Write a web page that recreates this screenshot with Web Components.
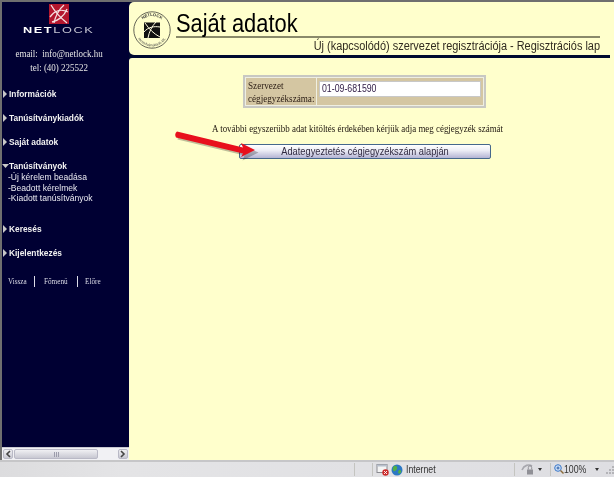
<!DOCTYPE html>
<html>
<head>
<meta charset="utf-8">
<title>Saját adatok</title>
<style>
  html, body { margin: 0; padding: 0; height: 100%; overflow: hidden; }
  body { background: #ffffcc; font-family: "Liberation Sans", Arial, sans-serif; }
</style>
</head>
<body>
<nl-window>
  <nl-sidebar slot="side">
    <nl-menu-item>Információk</nl-menu-item>
    <nl-menu-item>Tanúsítványkiadók</nl-menu-item>
    <nl-menu-item>Saját adatok</nl-menu-item>
    <nl-menu-item open>Tanúsítványok
      <span slot="sub">-Új kérelem beadása</span>
      <span slot="sub">-Beadott kérelmek</span>
      <span slot="sub">-Kiadott tanúsítványok</span>
    </nl-menu-item>
    <nl-menu-item>Keresés</nl-menu-item>
    <nl-menu-item>Kijelentkezés</nl-menu-item>
  </nl-sidebar>
  <nl-header slot="head" title-text="Saját adatok" sub-text="Új (kapcsolódó) szervezet regisztrációja - Regisztrációs lap"></nl-header>
  <nl-form slot="main"></nl-form>
</nl-window>

<script>
class NlWindow extends HTMLElement {
  constructor() {
    super();
    this.attachShadow({ mode: 'open' });
    this.shadowRoot.innerHTML = `
      <style>
        :host { display: flex; flex-direction: column; width: 614px; height: 477px; filter: blur(.35px); }
        .top { flex: 1; display: flex; min-height: 0; background: #6f6f6f; padding: 2px 0 0 2px; }
        .left { width: 127px; display: flex; flex-direction: column; }
        .right { flex: 1; display: flex; flex-direction: column; background: #000033; }
      </style>
      <div class="top">
        <div class="left">
          <slot name="side"></slot>
          <nl-scrollbar></nl-scrollbar>
        </div>
        <div class="right">
          <slot name="head"></slot>
          <slot name="main"></slot>
        </div>
      </div>
      <nl-statusbar></nl-statusbar>
    `;
  }
}

class NlSidebar extends HTMLElement {
  constructor() {
    super();
    this.attachShadow({ mode: 'open' });
    this.shadowRoot.innerHTML = `
      <style>
        :host { display: block; flex: 1; background: #000033; color: #fff; overflow: hidden; }
        .logo { display: flex; flex-direction: column; align-items: center; padding: 2px 13px 0 0; }
        .logo svg { display: block; }
        .brand { font: bold 9.5px "Liberation Sans", Arial, sans-serif; letter-spacing: 1.2px; line-height: 10px; margin-top: 1px; transform: scaleX(1.34); }
        .brand span { font-weight: normal; color: #c4c4d2; }
        .contact { font: 9.5px/14px "Liberation Serif", "Times New Roman", serif; color: #e4e4e4; text-align: center; padding: 12px 13px 0 0; white-space: pre; margin-bottom: 7px; transform: scaleX(.946); transform-origin: 59px 0; }
        .links { display: flex; align-items: center; font: 8px "Liberation Serif", "Times New Roman", serif; color: #dcdce8; padding: 11px 0 0 6px; }
        .links span { height: 11px; line-height: 11px; transform: scaleX(.9); transform-origin: left; }
        .links i { width: 1px; height: 11px; background: #dcdce8; }
      </style>
      <div class="logo">
        <svg width="20" height="20" viewBox="0 0 20 20">
          <rect width="20" height="20" fill="#b3172e"/>
          <g fill="none" stroke="#f4dfe0" stroke-width="1.3">
            <path d="M2 1 C6 8 13 15 18 19"/>
            <path d="M15 1 C10 5 6 13 5 19"/>
            <path d="M1 13 C6 6 13 5 19 8"/>
            <path d="M3 18 C8 17 15 13 18 5"/>
          </g>
        </svg>
        <div class="brand">NET<span>LOCK</span></div>
      </div>
      <div class="contact">email:  info@netlock.hu
tel: (40) 225522</div>
      <slot></slot>
      <div class="links">
        <span>Vissza</span><i style="margin:0 9px 0 5px"></i><span>Főmenü</span><i style="margin:0 7px"></i><span>Előre</span>
      </div>
    `;
  }
}

class NlMenuItem extends HTMLElement {
  constructor() {
    super();
    this.attachShadow({ mode: 'open' });
    const open = this.hasAttribute('open');
    const arrow = open
      ? '<polygon points="0,2 7,2 3.5,6" fill="#c8c8c8"/>'
      : '<polygon points="1,0 5,4 1,8" fill="#c8c8c8"/>';
    this.shadowRoot.innerHTML = `
      <style>
        :host { display: block; font: bold 9.5px/12px "Liberation Sans", Arial, sans-serif; color: #f2f2f2; padding: 6px 0 ${open ? 13 : 6}px 0; white-space: nowrap; }
        .row { display: flex; align-items: center; }
        svg { width: 7px; height: 8px; flex: none; }
        .label { transform: scaleX(.88); transform-origin: left; }
        .sub { display: flex; flex-direction: column; font-weight: normal; line-height: 10.5px; margin-left: 6px; color: #e8e8f0; transform: scaleX(.9); transform-origin: left; }
      </style>
      <div class="row"><svg viewBox="0 0 7 8">${arrow}</svg><div class="label"><slot></slot></div></div>
      <div class="sub"><slot name="sub"></slot></div>
    `;
  }
}

class NlScrollbar extends HTMLElement {
  constructor() {
    super();
    this.attachShadow({ mode: 'open' });
    this.shadowRoot.innerHTML = `
      <style>
        :host { display: flex; height: 13px; flex: none; background: #f1f1f4; padding: 1px; box-sizing: border-box; gap: 1px; border-top: 1px solid #c9c9d2; }
        .b { box-sizing: border-box; border: 1px solid #b9b9c6; border-radius: 2px; background: linear-gradient(#f0f0f3, #c8c8d2); display: flex; align-items: center; justify-content: center; }
        .arr { width: 10px; }
        .thumb { width: 84px; gap: 1px; }
        .thumb i { width: 1px; height: 5px; background: #9c9cab; }
        .track { flex: 1; }
        path { fill: none; stroke: #444; stroke-width: 1.6; }
      </style>
      <div class="b arr"><svg width="6" height="8"><path d="M5 1 L2 4 L5 7"/></svg></div>
      <div class="b thumb"><i></i><i></i><i></i></div>
      <div class="track"></div>
      <div class="b arr"><svg width="6" height="8"><path d="M1 1 L4 4 L1 7"/></svg></div>
    `;
  }
}

class NlHeader extends HTMLElement {
  constructor() {
    super();
    this.attachShadow({ mode: 'open' });
    this.shadowRoot.innerHTML = `
      <style>
        :host { display: block; flex: none; height: 56px; box-sizing: border-box; padding-bottom: 3px; background: linear-gradient(90deg, #000a30 calc(100% - 4px), #ffffcc 0); }
        .wrap { display: flex; padding: 1px 14px 0 4px; height: 100%; box-sizing: border-box; background: #ffffcc; border-radius: 5px 0 0 5px; }
        .seal { flex: none; margin-top: 8px; }
        .text { flex: 1; margin-left: 5px; min-width: 0; }
        h1 { font: normal 25px/29px "Liberation Sans", Arial, sans-serif; color: #000; margin: 0; padding-top: 6px; height: 27px; border-bottom: 2px solid #8a8a6a; }
        h1 span { display: inline-block; transform: scaleX(.875); transform-origin: left; }
        p { font: 12.5px/14px "Liberation Sans", Arial, sans-serif; color: #302a20; margin: 1px 0 0; text-align: right; transform: scaleX(.875); transform-origin: right; white-space: nowrap; }
      </style>
      <div class="wrap">
        <svg class="seal" width="38" height="38" viewBox="0 0 38 38">
          <circle cx="19" cy="19" r="18.2" fill="none" stroke="#55554a" stroke-width=".9"/>
          <defs>
            <path id="top" d="M5 19 A14 14 0 0 1 33 19"/>
            <path id="bot" d="M2.6 19 A16.4 16.4 0 0 0 35.4 19"/>
          </defs>
          <text font-family="Liberation Sans" font-size="4.2" font-weight="bold" fill="#333"><textPath href="#top" startOffset="50%" text-anchor="middle">NETLOCK</textPath></text>
          <text font-family="Liberation Sans" font-size="3.6" fill="#444"><textPath href="#bot" startOffset="50%" text-anchor="middle">tanúsítványkiadó kft.</textPath></text>
          <rect x="11" y="11.5" width="16" height="15.5" fill="#111"/>
          <g fill="none" stroke="#fffbe0" stroke-width="1">
            <path d="M12 12 C16 18 21 23 27 26"/>
            <path d="M23 11 C19 15 16 21 15 27"/>
            <path d="M11 21 C15 16 21 15 27 16"/>
          </g>
        </svg>
        <div class="text">
          <h1><span id="t"></span></h1>
          <p id="s"></p>
        </div>
      </div>
    `;
  }
  connectedCallback() {
    this.shadowRoot.getElementById('t').textContent = this.getAttribute('title-text');
    this.shadowRoot.getElementById('s').textContent = this.getAttribute('sub-text');
  }
}

class NlForm extends HTMLElement {
  constructor() {
    super();
    this.attachShadow({ mode: 'open' });
    this.shadowRoot.innerHTML = `
      <style>
        :host { display: flex; flex-direction: column; align-items: flex-start; flex: 1; position: relative; padding: 17px 0 0 114px; box-sizing: border-box; background: #ffffcc; border-top-left-radius: 3px; font-family: "Liberation Serif", "Times New Roman", serif; color: #221a10; }
        .tbl { display: flex; width: 243px; height: 33px; box-sizing: border-box; border: 2px solid #c8c8c2; padding: 1px; background: #efefe2; gap: 1px; }
        .lbl { width: 70px; background: #d4c6a2; font-size: 10.5px; line-height: 12.5px; padding: 2px 0 0 2px; box-sizing: border-box; white-space: nowrap; color: #2a1c14; }
        .lbl div { transform: scaleX(.87); transform-origin: left; }
        .val { flex: 1; background: #d4c6a2; padding: 3px 2px; box-sizing: border-box; }
        .inp { height: 16px; background: #fff; border: 1px solid #c8c8c8; box-sizing: border-box; font: 10px/14px "Liberation Sans", Arial, sans-serif; color: #34204a; padding-left: 2px; }
        .inp span { display: block; transform: scaleX(.875); transform-origin: left; }
        .note { font-size: 9.7px; line-height: 12px; margin: 15px 0 0 -31px; white-space: nowrap; color: #201810; transform: scaleX(.92); transform-origin: left; }
        .btn { width: 252px; height: 15px; margin: 9px 0 0 -4px; box-sizing: border-box; border: 1px solid #46688c; border-radius: 2px; background: linear-gradient(#ffffff, #eeeef6 40%, #b4b4d4); font: 10.6px/13px "Liberation Sans", Arial, sans-serif; color: #302a40; text-align: center; }
        .btn span { display: block; transform: scaleX(.875); }
        svg { position: absolute; left: 46px; top: 68px; overflow: visible; }
      </style>
      <div class="tbl">
        <div class="lbl"><div>Szervezet<br>cégjegyzékszáma:</div></div>
        <div class="val"><div class="inp"><span>01-09-681590</span></div></div>
      </div>
      <div class="note">A további egyszerübb adat kitöltés érdekében kérjük adja meg cégjegyzék számát</div>
      <div class="btn"><span>Adategyeztetés cégjegyzékszám alapján</span></div>
      <svg width="90" height="40" viewBox="0 0 90 40">
        <path d="M2 6 L68 22 L66 17 L82 24 L66 32 L68 27 L1 11 Z" fill="#000" opacity=".25" transform="translate(1.5,2.5)"/>
        <path d="M2 5.5 L68 21.5 L66 17 L80 24 L66 31 L68 27.5 L1 11.5 Q-1 8 2 5.5 Z" fill="#e8101c"/>
      </svg>
    `;
  }
}

class NlStatusbar extends HTMLElement {
  constructor() {
    super();
    this.attachShadow({ mode: 'open' });
    this.shadowRoot.innerHTML = `
      <style>
        :host { display: flex; align-items: center; height: 17px; flex: none; box-sizing: border-box; border-top: 2px solid #c6c6c8; background: linear-gradient(90deg, #dcdcde, #e4e4e6 20%, #dedee2); font: 10px "Liberation Sans", Arial, sans-serif; color: #333; white-space: nowrap; }
        i { width: 1px; height: 13px; background: #c4c4c0; flex: none; }
        .a { margin-left: 354px; }
        .b { margin-left: 17px; }
        svg { flex: none; }
        .t { transform: scaleX(.875); transform-origin: left; }
        .caret { width: 0; height: 0; border: 2.5px solid transparent; border-top: 3px solid #333; border-bottom: 0; flex: none; }
      </style>
      <i class="a"></i><i class="b"></i>
      <svg width="13" height="13" viewBox="0 0 13 13" style="margin-left:3px">
        <rect x="1" y="1.5" width="10" height="8" fill="#f4f4f4" stroke="#8a8a90"/>
        <rect x="1" y="1.5" width="10" height="2" fill="#b8c0cc"/>
        <circle cx="9.5" cy="9.5" r="3.2" fill="#cc2a2a"/>
        <path d="M8 8 L11 11 M11 8 L8 11" stroke="#fff" stroke-width=".9"/>
      </svg>
      <svg width="12" height="12" viewBox="0 0 12 12" style="margin-left:2px">
        <circle cx="6" cy="6" r="5.5" fill="#2c78c4"/>
        <path d="M3 2 C5 1 7 3 6 5 C5 6 4 8 2.5 7 C1 5 2 3 3 2 Z M8 6 C10 6 11 7 9.5 9 C8 10.5 7 9 7 8 Z" fill="#52b044"/>
      </svg>
      <span class="t" style="margin-left:3px;width:108px">Internet</span>
      <i></i>
      <svg width="14" height="13" viewBox="0 0 14 13" style="margin-left:6px">
        <path d="M1 7 C3 2 8 1 11 3" fill="none" stroke="#a8a8ae" stroke-width="1.6"/>
        <rect x="6" y="6.5" width="6" height="5" fill="#909096"/>
        <path d="M7.3 6.5 V4.5 A1.7 1.7 0 0 1 10.7 4.5 V6.5" fill="none" stroke="#909096"/>
      </svg>
      <span class="caret" style="margin-left:3px"></span>
      <i style="margin-left:8px"></i>
      <svg width="10" height="11" viewBox="0 0 10 11" style="margin-left:3px">
        <circle cx="4" cy="4" r="3.3" fill="#cfe0f6" stroke="#3b78c8"/>
        <path d="M2.5 4 H5.5 M4 2.5 V5.5" stroke="#2a5ea8"/>
        <path d="M6.5 6.5 L9.5 9.5" stroke="#8a6a3a" stroke-width="1.4"/>
      </svg>
      <span class="t" style="width:31px">100%</span>
      <span class="caret"></span>
      <svg width="8" height="9" viewBox="0 0 8 9" style="margin-left:7px">
        <g fill="#b4b4b8"><rect x="6" y="1" width="2" height="2"/><rect x="3" y="4" width="2" height="2"/><rect x="6" y="4" width="2" height="2"/><rect x="0" y="7" width="2" height="2"/><rect x="3" y="7" width="2" height="2"/><rect x="6" y="7" width="2" height="2"/></g>
      </svg>
    `;
  }
}

customElements.define('nl-window', NlWindow);
customElements.define('nl-sidebar', NlSidebar);
customElements.define('nl-menu-item', NlMenuItem);
customElements.define('nl-scrollbar', NlScrollbar);
customElements.define('nl-header', NlHeader);
customElements.define('nl-form', NlForm);
customElements.define('nl-statusbar', NlStatusbar);
</script>
</body>
</html>
